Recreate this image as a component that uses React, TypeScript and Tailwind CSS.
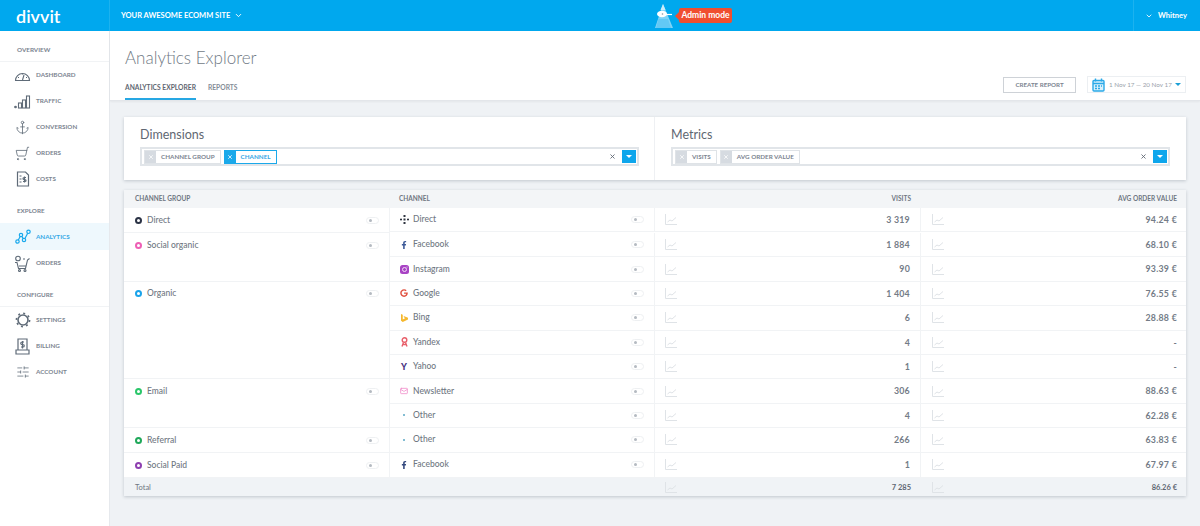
import { ChevronDown, X, Mail, Anchor, ShoppingCart, SlidersHorizontal } from "lucide-react"
import { FaFacebookF, FaGoogle } from "react-icons/fa"
import type { ReactNode } from "react"

const Gauge = () => (
    <svg width="17" height="13" viewBox="0 0 17 13" fill="none" stroke="#5f6b78" strokeWidth="1.1">
        <path d="M1.5 11.5a7 7 0 1 1 14 0z" />
        <path d="M8.5 11 10 6M4 8.5h1M12 8.5h1M8.5 4.5v1" />
    </svg>
)
const Bars = () => (
    <svg width="17" height="15" viewBox="0 0 17 15" fill="none" stroke="#5f6b78" strokeWidth="1.1">
        <circle cx="1.5" cy="13" r=".8" fill="#5f6b78" />
        <rect x="4.5" y="9" width="3" height="5" />
        <rect x="8.5" y="6" width="3" height="8" />
        <rect x="12.5" y="2" width="3" height="12" />
    </svg>
)
const Receipt = () => (
    <svg width="14" height="16" viewBox="0 0 14 16" fill="none" stroke="#5f6b78" strokeWidth="1.2">
        <path d="M1.5 1h8l3 3v11h-11z" />
        <path d="M3.5 5h2M3.5 8h2M3.5 11h2M8.5 5.5v6M10 6.5H8a1 1 0 0 0 0 2h1a1 1 0 0 1 0 2H7" />
    </svg>
)
const Analytics = () => (
    <svg width="16" height="16" viewBox="0 0 16 16" fill="none" stroke="#1aa9ec" strokeWidth="1.2">
        <circle cx="2.5" cy="12.5" r="1.7" />
        <circle cx="6" cy="6" r="1.7" />
        <circle cx="9" cy="11" r="1.7" />
        <circle cx="13.5" cy="2.8" r="1.7" />
        <path d="m3.3 11 1.9-3.5M7 7.6l1.1 1.8M9.9 9.5l2.8-5.2" />
    </svg>
)
const OrdersPerson = () => (
    <svg width="17" height="17" viewBox="0 0 17 17" fill="none" stroke="#5f6b78" strokeWidth="1.1">
        <circle cx="4" cy="3.5" r="2.3" />
        <path d="M1 7.5h2l1.5 6h7l2-8.5 2-1.5M5 11h7.5M9 4h2" />
        <circle cx="5.5" cy="15.5" r="1" />
        <circle cx="11" cy="15.5" r="1" />
    </svg>
)
const Billing = () => (
    <svg width="15" height="17" viewBox="0 0 15 17" fill="none" stroke="#5f6b78" strokeWidth="1.2">
        <path d="M3 12V1h9v11" />
        <path d="M1 12h13v4H1zM9 4H7a1 1 0 0 0 0 2.500h1a1 1 0 0 1 0 2.500H6M7.500 3v7.500" />
    </svg>
)
const Gear = () => (
    <svg width="16" height="16" viewBox="0 0 16 16" fill="none" stroke="#5f6b78">
        <circle cx="8" cy="8" r="5" strokeWidth="1.6" />
        <circle cx="8" cy="8" r="6.600" strokeWidth="1.6" strokeDasharray="2 3.180" />
    </svg>
)
const Calendar = () => (
    <svg className="shrink-0" width="13" height="14" viewBox="0 0 13 14" fill="none" stroke="#2aa9e8" strokeWidth="1.4">
        <rect x="1" y="2.500" width="11" height="10.500" rx="1" fill="#d8f0fb" />
        <path d="M1 5.500h11M3.500 0.500v3M9.500 0.500v3" />
        <path d="M3 8h2M6 8h2M9 8h1M3 10.500h2M6 10.500h2" strokeWidth="1.300" />
    </svg>
)
const Spark = () => (
    <svg width="12" height="11" viewBox="0 0 12 11" fill="none" stroke="#dfe3e7" strokeWidth="1">
        <path d="M.5 0v10.500H12" />
        <path d="m2.500 8 2.500-2 2 1 4-3.500" />
    </svg>
)
const DirectIcon = () => (
    <svg width="9" height="9" viewBox="0 0 9 9" fill="#2f3440">
        <rect x="3.500" y="0" width="2" height="2" />
        <rect x="0" y="3.700" width="2" height="1.600" />
        <rect x="3.500" y="3.500" width="2" height="2" />
        <rect x="7" y="3.700" width="2" height="1.600" />
        <rect x="3.500" y="7" width="2" height="2" />
    </svg>
)
const BingIcon = () => (
    <svg width="7" height="8" viewBox="0 0 8 9" fill="#f5b82e">
        <path d="M0 0l2 .7v5.500l3-1.700-1.500-.7L3 2.300 8 4.200v2L2 9 0 7.700z" />
    </svg>
)
const InstagramIcon = () => (
    <svg width="9" height="9" viewBox="0 0 9 9" fill="none">
        <rect width="9" height="9" rx="2.500" fill="#a843c4" />
        <circle cx="4.500" cy="4.500" r="2" stroke="#f0d8f6" strokeWidth="1" />
        <circle cx="7" cy="2" r=".6" fill="#f0d8f6" />
    </svg>
)
const YandexIcon = () => (
    <svg width="7" height="10" viewBox="0 0 7 10" fill="none" stroke="#e8606b" strokeWidth="1.400">
        <circle cx="3.500" cy="3" r="2.300" />
        <path d="M2.500 5.500 1 9.500M4.500 5.500 6 9.500M1.500 7.500h4" />
    </svg>
)
const Mascot = () => (
    <svg width="18" height="24" viewBox="0 0 18 24">
        <path d="M8 0 18 24H0z" fill="#7fd3f7" />
        <path d="M8 0 10.500 6h-5z" fill="#c9ecfa" />
        <ellipse cx="7" cy="10" rx="5" ry="3.200" fill="#fff" />
        <circle cx="7.500" cy="10" r=".8" fill="#8a969e" />
        <path d="M11 10.500h6" stroke="#fff" strokeWidth="1.200" />
        <path d="M3.500 15h9.500l3 9H1z" fill="#62c9f5" />
    </svg>
)

const Tiny = () => <span className="h-[2px] w-[2px] rounded-full bg-[#5aa7c4]" />

type ChannelRow = { icon: ReactNode; name: string; visits: string; aov: string }
type Group = { color: string; name: string; channels: ChannelRow[] }

const groups: Group[] = [
    { color: "border-[#2b3245]", name: "Direct", channels: [{ icon: <DirectIcon />, name: "Direct", visits: "3 319", aov: "94.24 €" }] },
    {
        color: "border-[#ee5fb5]",
        name: "Social organic",
        channels: [
            { icon: <FaFacebookF className="h-[8px] w-[8px] text-[#3d5a98]" />, name: "Facebook", visits: "1 884", aov: "68.10 €" },
            { icon: <InstagramIcon />, name: "Instagram", visits: "90", aov: "93.39 €" },
        ],
    },
    {
        color: "border-[#1aa3ea]",
        name: "Organic",
        channels: [
            { icon: <FaGoogle className="h-[8px] w-[8px] text-[#e0503f]" />, name: "Google", visits: "1 404", aov: "76.55 €" },
            { icon: <BingIcon />, name: "Bing", visits: "6", aov: "28.88 €" },
            { icon: <YandexIcon />, name: "Yandex", visits: "4", aov: "-" },
            { icon: <span className="text-[9px] font-black leading-none text-[#47327e]">Y</span>, name: "Yahoo", visits: "1", aov: "-" },
        ],
    },
    {
        color: "border-[#2bc66a]",
        name: "Email",
        channels: [
            { icon: <Mail className="h-[8px] w-[10px] text-[#f08fcb]" strokeWidth={2.5} />, name: "Newsletter", visits: "306", aov: "88.63 €" },
            { icon: <Tiny />, name: "Other", visits: "4", aov: "62.28 €" },
        ],
    },
    { color: "border-[#1fa85a]", name: "Referral", channels: [{ icon: <Tiny />, name: "Other", visits: "266", aov: "63.83 €" }] },
    {
        color: "border-[#8e3fb0]",
        name: "Social Paid",
        channels: [{ icon: <FaFacebookF className="h-[8px] w-[8px] text-[#34497e]" />, name: "Facebook", visits: "1", aov: "67.97 €" }],
    },
]

const Toggle = () => (
    <span className="flex h-[7px] w-[13px] items-center rounded-full border border-[#eef0f2] pl-[2px]">
        <span className="h-[3px] w-[3px] rounded-full bg-[#b4bac1]" />
    </span>
)

const NavItem = ({ icon, label, active }: { icon: ReactNode; label: string; active?: boolean }) => (
    <div className={`flex items-center ${active ? "h-[27px] bg-[#eef8fd] text-[#37a9e6]" : "h-[26px] text-[#7c8591]"}`}>
        <span className="flex w-[36px] justify-center pl-[9px]">{icon}</span>
        <span className="text-[6.3px] font-bold">{label}</span>
    </div>
)

const NavTitle = ({ label, ruled }: { label: string; ruled?: boolean }) => (
    <div className={`flex h-[24px] items-center pl-[17px] text-[6.3px] font-bold text-[#7c8591] ${ruled ? "border-b border-[#f1f3f5]" : ""}`}>
        {label}
    </div>
)

const Chip = ({ label, active }: { label: string; active?: boolean }) => (
    <span className={`flex h-[14px] items-stretch border ${active ? "border-[#1ba9ea] text-[#36a6e4]" : "border-[#dfe3e7] text-[#7c8591]"}`}>
        <span className={`flex w-[11px] items-center justify-center ${active ? "bg-[#1ba9ea] text-white" : "bg-[#d6dbe1] text-white"}`}>
            <X className="h-[6px] w-[6px]" strokeWidth={3} />
        </span>
        <span className="flex items-center px-[5px] text-[6.3px] font-bold">{label}</span>
    </span>
)

const Picker = ({ title, chips, border }: { title: string; chips: ReactNode; border?: boolean }) => (
    <div className={`w-[531px] pl-[16px] ${border ? "border-r border-[#eef0f3] pr-[15px]" : "pr-[16px]"}`}>
        <div className="flex h-[30px] items-end pb-[6px] text-[12.5px] leading-none text-[#5f6772]">{title}</div>
        <div className="flex h-[19px] items-center gap-[3px] border-2 border-[#e1e5e9] pl-[2px] pr-[1px]">
            {chips}
            <X className="ml-auto h-[7px] w-[7px] text-[#5f6772]" strokeWidth={3} />
            <span className="ml-[3px] flex h-[13px] w-[14px] items-center justify-center bg-[#0ea6ec]">
                <span className="h-0 w-0 border-x-[3px] border-t-[3px] border-x-transparent border-t-white" />
            </span>
        </div>
    </div>
)

const App = () => {
    return (
        <div className="flex h-[526px] w-[1200px] flex-col overflow-hidden bg-[#eff2f5] font-['Lato',sans-serif]">
            <header className="flex h-[31px] shrink-0 items-center bg-[#00a8ee] text-white">
                <div className="flex h-full w-[110px] items-center border-r border-[#1cb2ef] pl-[16px] text-[18px] font-semibold leading-none">divvit</div>
                <div className="flex w-[545px] items-center gap-[4px] pl-[11px] text-[7.5px] font-bold">
                    YOUR AWESOME ECOMM SITE
                    <ChevronDown className="h-[9px] w-[9px]" strokeWidth={2.5} />
                </div>
                <div className="flex items-center">
                    <Mascot />
                    <span className="ml-[2px] h-0 w-0 border-y-[4px] border-r-[4px] border-y-transparent border-r-[#f04e30]" />
                    <span className="flex h-[15px] w-[53px] items-center justify-center rounded-[2px] bg-[#f04e30] text-[8.5px] font-bold">Admin mode</span>
                </div>
                <div className="ml-auto flex h-full w-[67px] items-center gap-[5px] border-l border-[#1cb2ef] pl-[11px] text-[7.5px] font-bold">
                    <ChevronDown className="h-[8px] w-[8px]" strokeWidth={2.5} />
                    Whitney
                </div>
            </header>

            <div className="flex min-h-0 flex-1">
                <aside className="w-[110px] shrink-0 border-r border-[#e6e9ed] bg-white pt-[7px]">
                    <NavTitle label="OVERVIEW" ruled />
                    <NavItem icon={<Gauge />} label="DASHBOARD" />
                    <NavItem icon={<Bars />} label="TRAFFIC" />
                    <NavItem icon={<Anchor className="h-[15px] w-[15px] text-[#5f6b78]" strokeWidth={1.3} />} label="CONVERSION" />
                    <NavItem icon={<ShoppingCart className="h-[15px] w-[15px] -scale-x-100 text-[#5f6b78]" strokeWidth={1.3} />} label="ORDERS" />
                    <NavItem icon={<Receipt />} label="COSTS" />
                    <div className="pt-[7px]">
                        <NavTitle label="EXPLORE" />
                    </div>
                    <NavItem icon={<Analytics />} label="ANALYTICS" active />
                    <NavItem icon={<OrdersPerson />} label="ORDERS" />
                    <div className="pt-[7px]">
                        <NavTitle label="CONFIGURE" ruled />
                    </div>
                    <NavItem icon={<Gear />} label="SETTINGS" />
                    <NavItem icon={<Billing />} label="BILLING" />
                    <NavItem icon={<SlidersHorizontal className="h-[14px] w-[14px] text-[#5f6b78]" strokeWidth={1.3} />} label="ACCOUNT" />
                </aside>

                <main className="min-w-0 flex-1">
                    <div className="flex h-[70px] items-end justify-between border-b border-[#e3e6ea] bg-white pl-[15px] pr-[14px] shadow-[0_1px_2px_rgba(0,0,0,0.05)]">
                        <div>
                            <h1 className="mb-[16px] text-[17px] font-light leading-none text-[#717a85]">Analytics Explorer</h1>
                            <div className="flex gap-[12px] text-[6.7px] font-bold">
                                <span className="border-b-2 border-[#26a7e3] pb-[6px] leading-[10px] text-[#5f6772]">ANALYTICS EXPLORER</span>
                                <span className="pb-[6px] leading-[10px] text-[#858d97]">REPORTS</span>
                            </div>
                        </div>
                        <div className="mb-[7px] flex items-center gap-[11px]">
                            <button className="h-[16px] w-[73px] border border-[#ced2d7] text-[6.200px] font-bold text-[#7c8591]">CREATE REPORT</button>
                            <div className="flex h-[17px] w-[99px] items-center whitespace-nowrap border border-[#eceff2] pl-[4px] text-[6.3px] text-[#9aa2ab]">
                                <Calendar />
                                <span className="ml-[4px]">1 Nov 17 — 20 Nov 17</span>
                                <span className="ml-auto mr-[4px] h-0 w-0 border-x-[3px] border-t-[3px] border-x-transparent border-t-[#1b9fd6]" />
                            </div>
                        </div>
                    </div>

                    <div className="ml-[14px] mt-[16px] w-[1062px]">
                        <section className="flex h-[63px] bg-white shadow-[0_1px_3px_rgba(60,70,90,0.25)]">
                            <Picker title="Dimensions" border chips={<><Chip label="CHANNEL GROUP" /><Chip label="CHANNEL" active /></>} />
                            <Picker title="Metrics" chips={<><Chip label="VISITS" /><Chip label="AVG ORDER VALUE" /></>} />
                        </section>

                        <section className="mt-[10px] bg-white text-[#6f7782] shadow-[0_1px_3px_rgba(60,70,90,0.25)]">
                            <div className="grid h-[18px] grid-cols-[266px_265px_266px_265px] items-center bg-[#f3f5f7] text-[6.500px] font-bold text-[#6f7782]">
                                <span className="pl-[11px]">CHANNEL GROUP</span>
                                <span className="pl-[9px]">CHANNEL</span>
                                <span className="pr-[10px] text-right">VISITS</span>
                                <span className="pr-[9px] text-right">AVG ORDER VALUE</span>
                            </div>
                            {groups.map((g) => (
                                <div key={g.name} className="flex">
                                    <div className="w-[266px] border-b border-r border-[#f1f3f5]">
                                        <div className="flex h-[24px] w-full items-center pl-[11px] pr-[10px] text-[8.5px] font-medium">
                                            <span className={`h-[7px] w-[7px] rounded-full border-2 ${g.color}`} />
                                            <span className="ml-[5px]">{g.name}</span>
                                            <span className="ml-auto"><Toggle /></span>
                                        </div>
                                    </div>
                                    <div className="flex-1">
                                        {g.channels.map((c) => (
                                            <div key={c.name + c.visits} className="grid h-[24.4px] grid-cols-[265px_266px_265px] items-center border-b border-[#f1f3f5] text-[8.5px] font-medium">
                                                <div className="flex h-full items-center border-r border-[#f1f3f5] pl-[9px] pr-[10px]">
                                                    <span className="flex w-[10px] justify-center">{c.icon}</span>
                                                    <span className="ml-[4px]">{c.name}</span>
                                                    <span className="ml-auto"><Toggle /></span>
                                                </div>
                                                <div className="flex h-full items-center justify-between border-r border-[#f1f3f5] pl-[10px] pr-[10px]">
                                                    <Spark />
                                                    <span className="text-[8.8px] font-bold tracking-[0.03em] text-[#747c87]">{c.visits}</span>
                                                </div>
                                                <div className="flex h-full items-center justify-between pl-[11px] pr-[9px]">
                                                    <Spark />
                                                    <span className="text-[8.8px] font-bold tracking-[0.03em] text-[#747c87]">{c.aov}</span>
                                                </div>
                                            </div>
                                        ))}
                                    </div>
                                </div>
                            ))}
                            <div className="grid h-[18px] grid-cols-[531px_266px_265px] items-center bg-[#f0f3f6] text-[7.5px]">
                                <span className="pl-[11px] text-[#6f7782]">Total</span>
                                <div className="flex items-center justify-between pl-[10px] pr-[10px]">
                                    <Spark />
                                    <span className="font-bold text-[#5f6772]">7 285</span>
                                </div>
                                <div className="flex items-center justify-between pl-[11px] pr-[9px]">
                                    <Spark />
                                    <span className="font-bold text-[#5f6772]">86.26 €</span>
                                </div>
                            </div>
                        </section>
                    </div>
                </main>
            </div>
        </div>
    )
}

export default App
